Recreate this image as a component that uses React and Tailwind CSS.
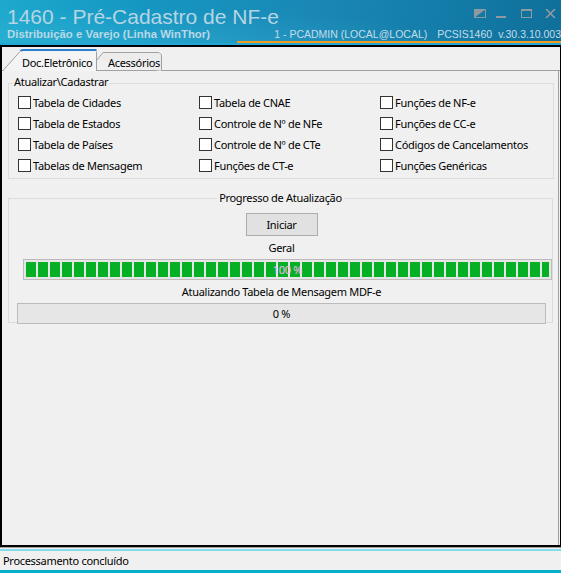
import React from "react";

const ui = { fontFamily: '"Noto Sans", "Liberation Sans", sans-serif' };
const arial = { fontFamily: '"Liberation Sans", Arial, sans-serif' };

function Check({ label }) {
  return (
    <div className="flex items-center h-[21px] gap-[2px]">
      <span className="w-[13px] h-[13px] border border-[#333333] bg-white shrink-0" />
      <span className="text-[11px] leading-[15px] text-black whitespace-nowrap">{label}</span>
    </div>
  );
}

function WinIcons() {
  return (
    <div className="flex items-start gap-0 pt-[9px] pr-[5px]">
      <svg width="12" height="9" viewBox="0 0 12 9" className="mr-[10px]">
        <rect x="0.5" y="0.5" width="11" height="8" fill="none" stroke="#8f9aa0" />
        <polygon points="0,0 12,0 0,9" fill="#8f9aa0" />
      </svg>
      <svg width="10" height="9" viewBox="0 0 10 9" className="mr-[15px]">
        <rect x="0" y="7" width="10" height="2" fill="#8f9aa0" />
      </svg>
      <svg width="11" height="9" viewBox="0 0 11 9" className="mr-[13px]">
        <rect x="0.5" y="0.5" width="10" height="8" fill="none" stroke="#8f9aa0" />
        <rect x="0" y="0" width="11" height="2" fill="#8f9aa0" />
      </svg>
      <svg width="11" height="9" viewBox="0 0 11 9">
        <path d="M1 0 L10 9 M10 0 L1 9" stroke="#8f9aa0" strokeWidth="1.6" />
      </svg>
    </div>
  );
}

export default function App() {
  const segs = Array.from({ length: 44 });
  return (
    <div className="w-[561px] h-[573px] flex flex-col bg-[#f0f0f0] overflow-hidden tracking-[-0.3px]" style={ui}>
      {/* Title bar */}
      <div className="relative h-[45px] shrink-0 tracking-normal bg-[linear-gradient(100deg,#1ea9cd_0%,#1597c2_25%,#1a88b5_55%,#137ba7_80%,#0f6f9a_100%)]">
        <div className="absolute inset-0 bg-[radial-gradient(ellipse_at_20%_120%,rgba(80,200,230,0.35),transparent_60%)]" />
        <div className="relative flex justify-between">
          <div className="pl-[7px] pt-[5px] text-[21px] leading-[24px] text-[#b6d5e4] whitespace-nowrap" style={arial}>
            1460 - Pré-Cadastro de NF-e
          </div>
          <WinIcons />
        </div>
        <div className="relative flex justify-between items-start -mt-[1px] pl-[7px] pr-0 text-[11px] leading-[13px] whitespace-nowrap" style={arial}>
          <span className="font-bold text-[11.4px] text-[#b9d8e6]">Distribuição e Varejo (Linha WinThor)</span>
          <span className="flex text-[10.5px] text-[#c4dde8]">
            <span>1 - PCADMIN (LOCAL@LOCAL)</span>
            <span className="ml-[10px]">PCSIS1460</span>
            <span className="ml-[6px]">v.30.3.10.003</span>
          </span>
        </div>
        <div className="absolute left-[237px] right-0 bottom-[2px] h-[2px] bg-[#f39a1e]" />
        <div className="absolute left-0 right-0 bottom-0 h-[2px] bg-[#22a6d4]" />
      </div>

      {/* Frame */}
      <div className="flex-1 flex flex-col border-t-2 border-b-2 border-l-2 border-r border-black min-h-0">
        {/* Tab strip */}
        <div className="relative h-[24px] shrink-0 flex items-end text-[11px] leading-[15px] text-black">
          <svg className="absolute inset-0" width="558" height="24" viewBox="0 0 558 24">
            <path d="M0 23.5 H2 M94 23.5 H558" stroke="#a0a0a0" strokeWidth="1" />
            <path d="M95 13 L101 5.5 H157 L159.5 8 V24" fill="#ececec" stroke="#a0a0a0" strokeWidth="1" />
            <path d="M1 24 L18 4.5 H94.5 V24 Z" fill="#f4f4f4" />
            <path d="M1 23.5 L18 4.5 M94.5 4.5 V24" stroke="#a0a0a0" strokeWidth="1" fill="none" />
            <path d="M18.5 4 Q19 3 21 3 H94.5" stroke="#2a80d0" strokeWidth="2" fill="none" />
          </svg>
          <span className="relative w-[94px] pl-[20px] pb-[1px] whitespace-nowrap">Doc.Eletrônico</span>
          <span className="relative pl-[12px] pb-[1px] whitespace-nowrap">Acessórios</span>
        </div>

        {/* Tab panel */}
        <div className="flex-1 flex flex-col border-r border-[#a0a0a0] mr-[1px] pl-[6px] pr-[4px] text-[11px] leading-[15px] text-black">
          {/* Group 1 */}
          <div className="relative mt-[12px] h-[96px] border border-[#dcdcdc]">
            <span className="absolute -top-[10px] left-[4px] px-[1px] bg-[#f0f0f0] whitespace-nowrap">Atualizar\Cadastrar</span>
            <div className="grid grid-cols-[181px_181px_1fr] pl-[9px] pt-[8px]">
              <div className="flex flex-col">
                <Check label="Tabela de Cidades" />
                <Check label="Tabela de Estados" />
                <Check label="Tabela de Países" />
                <Check label="Tabelas de Mensagem" />
              </div>
              <div className="flex flex-col">
                <Check label="Tabela de CNAE" />
                <Check label="Controle de Nº de NFe" />
                <Check label="Controle de Nº de CTe" />
                <Check label="Funções de CT-e" />
              </div>
              <div className="flex flex-col">
                <Check label="Funções de NF-e" />
                <Check label="Funções de CC-e" />
                <Check label="Códigos de Cancelamentos" />
                <Check label="Funções Genéricas" />
              </div>
            </div>
          </div>

          {/* Group 2 */}
          <div className="relative mt-[19px] h-[125px] border border-[#dcdcdc] mr-[1px]">
            <div className="absolute -top-[9px] left-0 right-0 flex justify-center">
              <span className="px-[2px] bg-[#f0f0f0] whitespace-nowrap">Progresso de Atualização</span>
            </div>
            <div className="flex flex-col items-start pt-[14px]">
              <div className="self-center ml-[2px] w-[72px] h-[23px] flex items-center justify-center bg-[#e1e1e1] border border-[#adadad]">
                Iniciar
              </div>
              <div className="self-center ml-[2px] mt-[4px] h-[15px]">Geral</div>
              <div className="relative ml-[14px] mt-[4px] w-[529px] h-[21px] border border-[#bcbcbc] bg-[#e6e6e6] p-[2px] overflow-hidden">
                <div className="flex gap-[2px] h-full overflow-hidden">
                  {segs.map((_, i) => (
                    <div key={i} className="w-[10px] h-full shrink-0 bg-[#06b025]" />
                  ))}
                </div>
                <div className="absolute inset-0 flex items-center justify-center text-[#f9b4f9]">100 %</div>
              </div>
              <div className="self-center ml-[2px] mt-[4px] h-[15px] whitespace-nowrap">Atualizando Tabela de Mensagem MDF-e</div>
              <div className="ml-[8px] mt-[4px] w-[529px] h-[21px] border border-[#bcbcbc] bg-[#e6e6e6] flex items-center justify-center">
                0 %
              </div>
            </div>
          </div>
        </div>
      </div>

      {/* Status bar */}
      <div className="h-[1px] bg-[#a0a0a0] shrink-0" />
      <div className="h-[1px] bg-[#f0f0f0] shrink-0" />
      <div className="h-[24px] shrink-0 flex flex-col border-t-2 border-[#86dbea]">
        <div className="flex-1 flex items-center pl-[3px] text-[11px] leading-[15px] text-black">Processamento concluído</div>
        <div className="h-[3px] bg-[#07aec9]" />
      </div>
    </div>
  );
}
